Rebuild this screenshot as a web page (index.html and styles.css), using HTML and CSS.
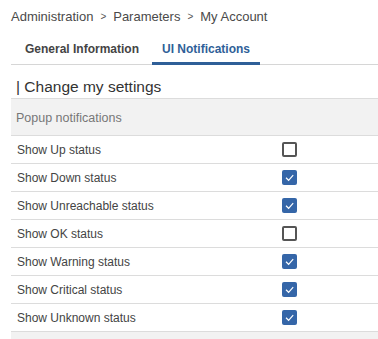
FILE: index.html
```html
<!DOCTYPE html>
<html>
<head>
<meta charset="utf-8">
<link rel="stylesheet" href="styles.css">
</head>
<body>
<div class="page">
  <div class="breadcrumb">
    <span>Administration</span><span class="sep">&gt;</span><span>Parameters</span><span class="sep">&gt;</span><span>My Account</span>
  </div>
  <div class="tabs">
    <div class="tab">General Information</div>
    <div class="tab active">UI Notifications</div>
  </div>
  <div class="title">| Change my settings</div>
  <div class="table">
    <div class="head">Popup notifications</div>
    <div class="row"><span class="label">Show Up status</span><span class="cb"></span></div>
    <div class="row"><span class="label">Show Down status</span><span class="cb on"><svg viewBox="0 0 15 15"><path d="M4 7.8 L6.6 10.3 L11.2 5.2" /></svg></span></div>
    <div class="row"><span class="label">Show Unreachable status</span><span class="cb on"><svg viewBox="0 0 15 15"><path d="M4 7.8 L6.6 10.3 L11.2 5.2" /></svg></span></div>
    <div class="row"><span class="label">Show OK status</span><span class="cb"></span></div>
    <div class="row"><span class="label">Show Warning status</span><span class="cb on"><svg viewBox="0 0 15 15"><path d="M4 7.8 L6.6 10.3 L11.2 5.2" /></svg></span></div>
    <div class="row"><span class="label">Show Critical status</span><span class="cb on"><svg viewBox="0 0 15 15"><path d="M4 7.8 L6.6 10.3 L11.2 5.2" /></svg></span></div>
    <div class="row"><span class="label">Show Unknown status</span><span class="cb on"><svg viewBox="0 0 15 15"><path d="M4 7.8 L6.6 10.3 L11.2 5.2" /></svg></span></div>
    <div class="foot"></div>
  </div>
</div>
</body>
</html>
```
FILE: styles.css
```css
html, body {
  margin: 0;
  padding: 0;
  background: #ffffff;
}
body {
  font-family: "Liberation Sans", Arial, sans-serif;
  color: #444444;
}
.page {
  padding-left: 11px;
}
.breadcrumb {
  padding-top: 9px;
  font-size: 13px;
  line-height: 16px;
  color: #4a4a4a;
  margin-bottom: 6px;
  display: flex;
  align-items: center;
}
.breadcrumb .sep {
  font-size: 10px;
  margin: 0 7px;
  color: #555555;
}
.tabs {
  display: flex;
  gap: 3px;
  padding-left: 4px;
  border-bottom: 1px solid #d6d6d6;
  height: 34px;
  box-sizing: border-box;
}
.tab {
  padding: 11px 10px 6px;
  line-height: 14px;
  font-size: 12px;
  font-weight: bold;
  color: #444444;
  border-bottom: 3px solid transparent;
  height: 34px;
  box-sizing: border-box;
}
.tab.active {
  color: #2f5f98;
  border-bottom-color: #2f5f98;
}
.title {
  padding: 12px 0 1px 5px;
  font-size: 15.5px;
  line-height: 20px;
  color: #333333;
  border-bottom: 1px solid #dcdcdc;
}
.head {
  background: #f2f2f2;
  height: 33px;
  padding-top: 3px;
  line-height: 33px;
  padding-left: 5px;
  font-size: 12.5px;
  color: #777777;
  border-bottom: 1px solid #dcdcdc;
}
.row {
  display: grid;
  grid-template-columns: 271px 1fr;
  align-items: center;
  height: 27px;
  border-bottom: 1px solid #dcdcdc;
  font-size: 12px;
}
.label {
  padding-left: 6px;
  padding-top: 1px;
  color: #444444;
}
.cb {
  width: 15px;
  height: 15px;
  box-sizing: border-box;
  border: 2px solid #555555;
  border-radius: 2px;
  display: block;
}
.cb.on {
  border: none;
  background: #3566a8;
}
.cb svg {
  display: block;
  width: 15px;
  height: 15px;
}
.cb svg path {
  fill: none;
  stroke: #ffffff;
  stroke-width: 1.2;
}
.foot {
  background: #f2f2f2;
  height: 20px;
}
```
